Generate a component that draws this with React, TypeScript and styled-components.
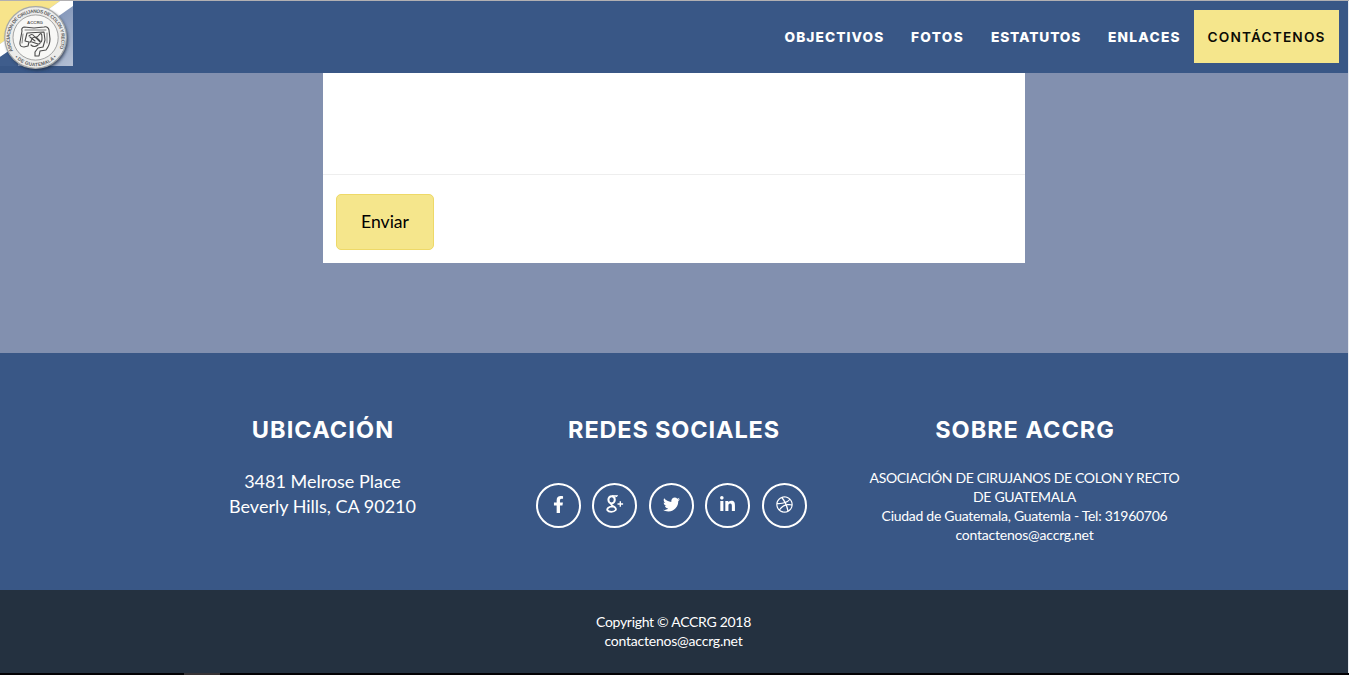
import React from "react";
import styled, { createGlobalStyle } from "styled-components";
import { FaDribbble, FaFacebookF, FaLinkedinIn, FaTwitter } from "react-icons/fa";

const GlobalStyle = createGlobalStyle`
  * { box-sizing: border-box; }
  html, body { margin: 0; padding: 0; overflow: hidden; }
  body { font-family: Lato, "Liberation Sans", sans-serif; color: #fff; background: #fff; }
  h4, p { margin: 0; }
`;

const Page = styled.div`
  width: 1349px;
  height: 675px;
  display: flex;
  flex-direction: column;
  border-top: 1px solid #b2b0b2;
  background: #e9ebf0;
`;

const Navbar = styled.header`
  width: 1348px;
  height: 72px;
  flex: none;
  display: flex;
  align-items: flex-start;
  justify-content: space-between;
  background: #395786;
  padding-right: 9px;
`;

const Logo = styled.svg`
  display: block;
  width: 73px;
  height: 72px;
`;

const Menu = styled.nav`
  display: flex;
  padding-top: 9px;
`;

const MenuLink = styled.a<{ $width: number; $tracking: number; $active?: boolean }>`
  width: ${(p) => p.$width}px;
  height: 53px;
  padding-left: 13.5px;
  line-height: 54px;
  white-space: nowrap;
  text-decoration: none;
  font-family: Inter, "Open Sans", sans-serif;
  font-size: 13.7px;
  font-weight: ${(p) => (p.$active ? 600 : 800)};
  letter-spacing: ${(p) => p.$tracking}px;
  color: ${(p) => (p.$active ? "#0c0c05" : "#fff")};
  background: ${(p) => (p.$active ? "#f5e68c" : "transparent")};
`;

const Contact = styled.section`
  width: 1348px;
  height: 280px;
  flex: none;
  background: #8290af;
`;

const FormPanel = styled.form`
  width: 702px;
  height: 190px;
  margin-left: 323px;
  background: #fff;
`;

const MessageArea = styled.div`
  height: 102px;
  border-bottom: 1px solid #eee;
`;

const SendButton = styled.button`
  display: block;
  width: 98px;
  height: 56px;
  margin: 19px 0 0 13px;
  padding: 0;
  border: 1px solid #eed968;
  border-radius: 5px;
  background: #f5e68c;
  color: #000;
  font: 400 17.6px/54px Lato, sans-serif;
`;

const Footer = styled.footer`
  width: 1348px;
  height: 237px;
  flex: none;
  display: grid;
  grid-template-columns: repeat(3, 351px);
  justify-content: center;
  padding-top: 61px;
  background: #395786;
  text-align: center;
`;

const Column = styled.div`
  padding: 0 13px;
`;

const Heading = styled.h4<{ $tracking: number }>`
  height: 32px;
  line-height: 32px;
  margin-bottom: 22px;
  white-space: nowrap;
  font-family: Inter, "Open Sans", sans-serif;
  font-size: 23.5px;
  font-weight: 700;
  letter-spacing: ${(p) => p.$tracking}px;
`;

const Address = styled.p`
  padding: 1px 1px 0 0;
  font-size: 18px;
  line-height: 25px;
`;

const Small = styled.p`
  padding-right: 1px;
  font-size: 14px;
  line-height: 19px;
`;

const Line = styled.span<{ $tracking: number }>`
  display: block;
  white-space: nowrap;
  letter-spacing: ${(p) => p.$tracking}px;
`;

const Socials = styled.div`
  display: flex;
  justify-content: center;
  gap: 11.5px;
  padding-top: 15px;
  margin-left: -6px;
`;

const SocialLink = styled.a`
  width: 45px;
  height: 45px;
  flex: none;
  display: flex;
  align-items: center;
  justify-content: center;
  padding-bottom: 3px;
  border: 2px solid #fff;
  border-radius: 50%;
  color: #fff;
`;

const Copyright = styled.div`
  width: 1348px;
  height: 83px;
  flex: none;
  padding-top: 22px;
  background: #243140;
  text-align: center;
`;

const BottomStrip = styled.div`
  height: 2px;
  flex: none;
  padding-left: 184px;
  background: #020103;
`;

const StripMark = styled.div`
  width: 36px;
  height: 2px;
  background: #373335;
`;

const Seal = () => (
  <Logo viewBox="0 0 73 72">
    <defs>
      <linearGradient id="sky" x1="0" y1="0" x2="1" y2="1">
        <stop offset="0" stopColor="#e9edf4" />
        <stop offset="0.45" stopColor="#8094b8" />
        <stop offset="1" stopColor="#b5c0d4" />
      </linearGradient>
      <filter id="shade" x="-20%" y="-20%" width="140%" height="140%">
        <feGaussianBlur stdDeviation="1.6" />
      </filter>
      <path id="upperArc" d="M13 50 A 25.8 25.8 0 1 1 58.2 50" />
      <path id="lowerArc" d="M14.2 55.5 A 28.6 28.6 0 0 0 57 55.5" />
    </defs>
    <rect width="73" height="65" fill="url(#sky)" />
    <path d="M0 0H60L0 43Z" fill="#f7e48b" />
    <path d="M60 0H73V5L0 56V43Z" fill="#fff" />
    <path d="M0 56L18 44V65H0Z" fill="#3f5d8c" />
    <circle cx="37" cy="38.5" r="31" fill="#1d2b42" opacity="0.75" filter="url(#shade)" />
    <circle cx="35.6" cy="36.5" r="30.8" fill="#ececea" stroke="#a7a9a9" strokeWidth="1.2" />
    <circle cx="35.6" cy="36.5" r="22.6" fill="#f8f8f6" stroke="#8b8d8d" strokeWidth="0.8" />
    <g fill="#5d6062" fontFamily="Liberation Sans" fontWeight="700" fontSize="4.8">
      <text letterSpacing="-0.35"><textPath href="#upperArc">ASOCIACIÓN DE CIRUJANOS DE COLON Y RECTO</textPath></text>
      <text letterSpacing="0.15"><textPath href="#lowerArc" startOffset="1">• DE GUATEMALA •</textPath></text>
      <text x="27" y="22.5" fontSize="4.4" textLength="16">ACCRG</text>
    </g>
    <g fill="none" stroke="#4b4b4b" strokeLinejoin="round" strokeLinecap="round">
      <path d="M24 26Q21 27 22 30L20 41Q19 46 24 46L28 45L29 41L25 40L27 32L44 31L45 39L43 46L38 47L35 51V55H39L40 50L46 49Q50 44 50 38L49 29Q48 25 44 26L34 27Z" strokeWidth="1.1" />
      <path d="M29 35Q32 32 34 35T39 34T42 37T38 39T32 38T30 41T35 42T40 42M31 44Q34 47 38 44M30 36L35 40M36 36L40 40" strokeWidth="1.1" />
      <path d="M25 29H46M23 33L22 42M47 32V42" strokeWidth="0.7" />
    </g>
  </Logo>
);

const GooglePlus = () => (
  <svg width="18" height="18" viewBox="0 0 18 18" fill="none" stroke="#fff">
    <ellipse cx="5.6" cy="4.8" rx="3.2" ry="3.6" strokeWidth="2" />
    <path d="M6 0.7H11.6L10 1.8H8" strokeWidth="1" />
    <path d="M5.8 8.4C4.6 9.3 5.3 10 7 11.1C10 12.8 10.4 14.2 9.5 15.3C7.8 17.3 2.6 17.3 1.4 15.3C0.6 13.3 2.8 11.6 6.9 11.4" strokeWidth="1.8" />
    <path d="M14.3 6.2V11.8M11.5 9H17.1" strokeWidth="1.4" />
  </svg>
);

export default function App() {
  return (
    <>
      <GlobalStyle />
      <Page>
        <Navbar>
          <Seal />
          <Menu>
            <MenuLink $width={126.5} $tracking={1.08}>OBJECTIVOS</MenuLink>
            <MenuLink $width={80} $tracking={1.3}>FOTOS</MenuLink>
            <MenuLink $width={117} $tracking={0.87}>ESTATUTOS</MenuLink>
            <MenuLink $width={99.5} $tracking={1.25}>ENLACES</MenuLink>
            <MenuLink $width={145} $tracking={1.15} $active>CONTÁCTENOS</MenuLink>
          </Menu>
        </Navbar>
        <Contact>
          <FormPanel>
            <MessageArea />
            <SendButton type="button">Enviar</SendButton>
          </FormPanel>
        </Contact>
        <Footer>
          <Column>
            <Heading $tracking={1.1}>UBICACIÓN</Heading>
            <Address>3481 Melrose Place<br />Beverly Hills, CA 90210</Address>
          </Column>
          <Column>
            <Heading $tracking={0.85}>REDES SOCIALES</Heading>
            <Socials>
              <SocialLink><FaFacebookF size={17} /></SocialLink>
              <SocialLink><GooglePlus /></SocialLink>
              <SocialLink><FaTwitter size={17} /></SocialLink>
              <SocialLink><FaLinkedinIn size={17} /></SocialLink>
              <SocialLink><FaDribbble size={17} /></SocialLink>
            </Socials>
          </Column>
          <Column>
            <Heading $tracking={1}>SOBRE ACCRG</Heading>
            <Small>
              <Line $tracking={-0.33}>ASOCIACIÓN DE CIRUJANOS DE COLON Y RECTO</Line>
              <Line $tracking={-0.3}>DE GUATEMALA</Line>
              <Line $tracking={-0.28}>Ciudad de Guatemala, Guatemla - Tel: 31960706</Line>
              <Line $tracking={-0.22}>contactenos@accrg.net</Line>
            </Small>
          </Column>
        </Footer>
        <Copyright>
          <Small>
            <Line $tracking={-0.3}>Copyright © ACCRG 2018</Line>
            <Line $tracking={-0.22}>contactenos@accrg.net</Line>
          </Small>
        </Copyright>
        <BottomStrip><StripMark /></BottomStrip>
      </Page>
    </>
  );
}
